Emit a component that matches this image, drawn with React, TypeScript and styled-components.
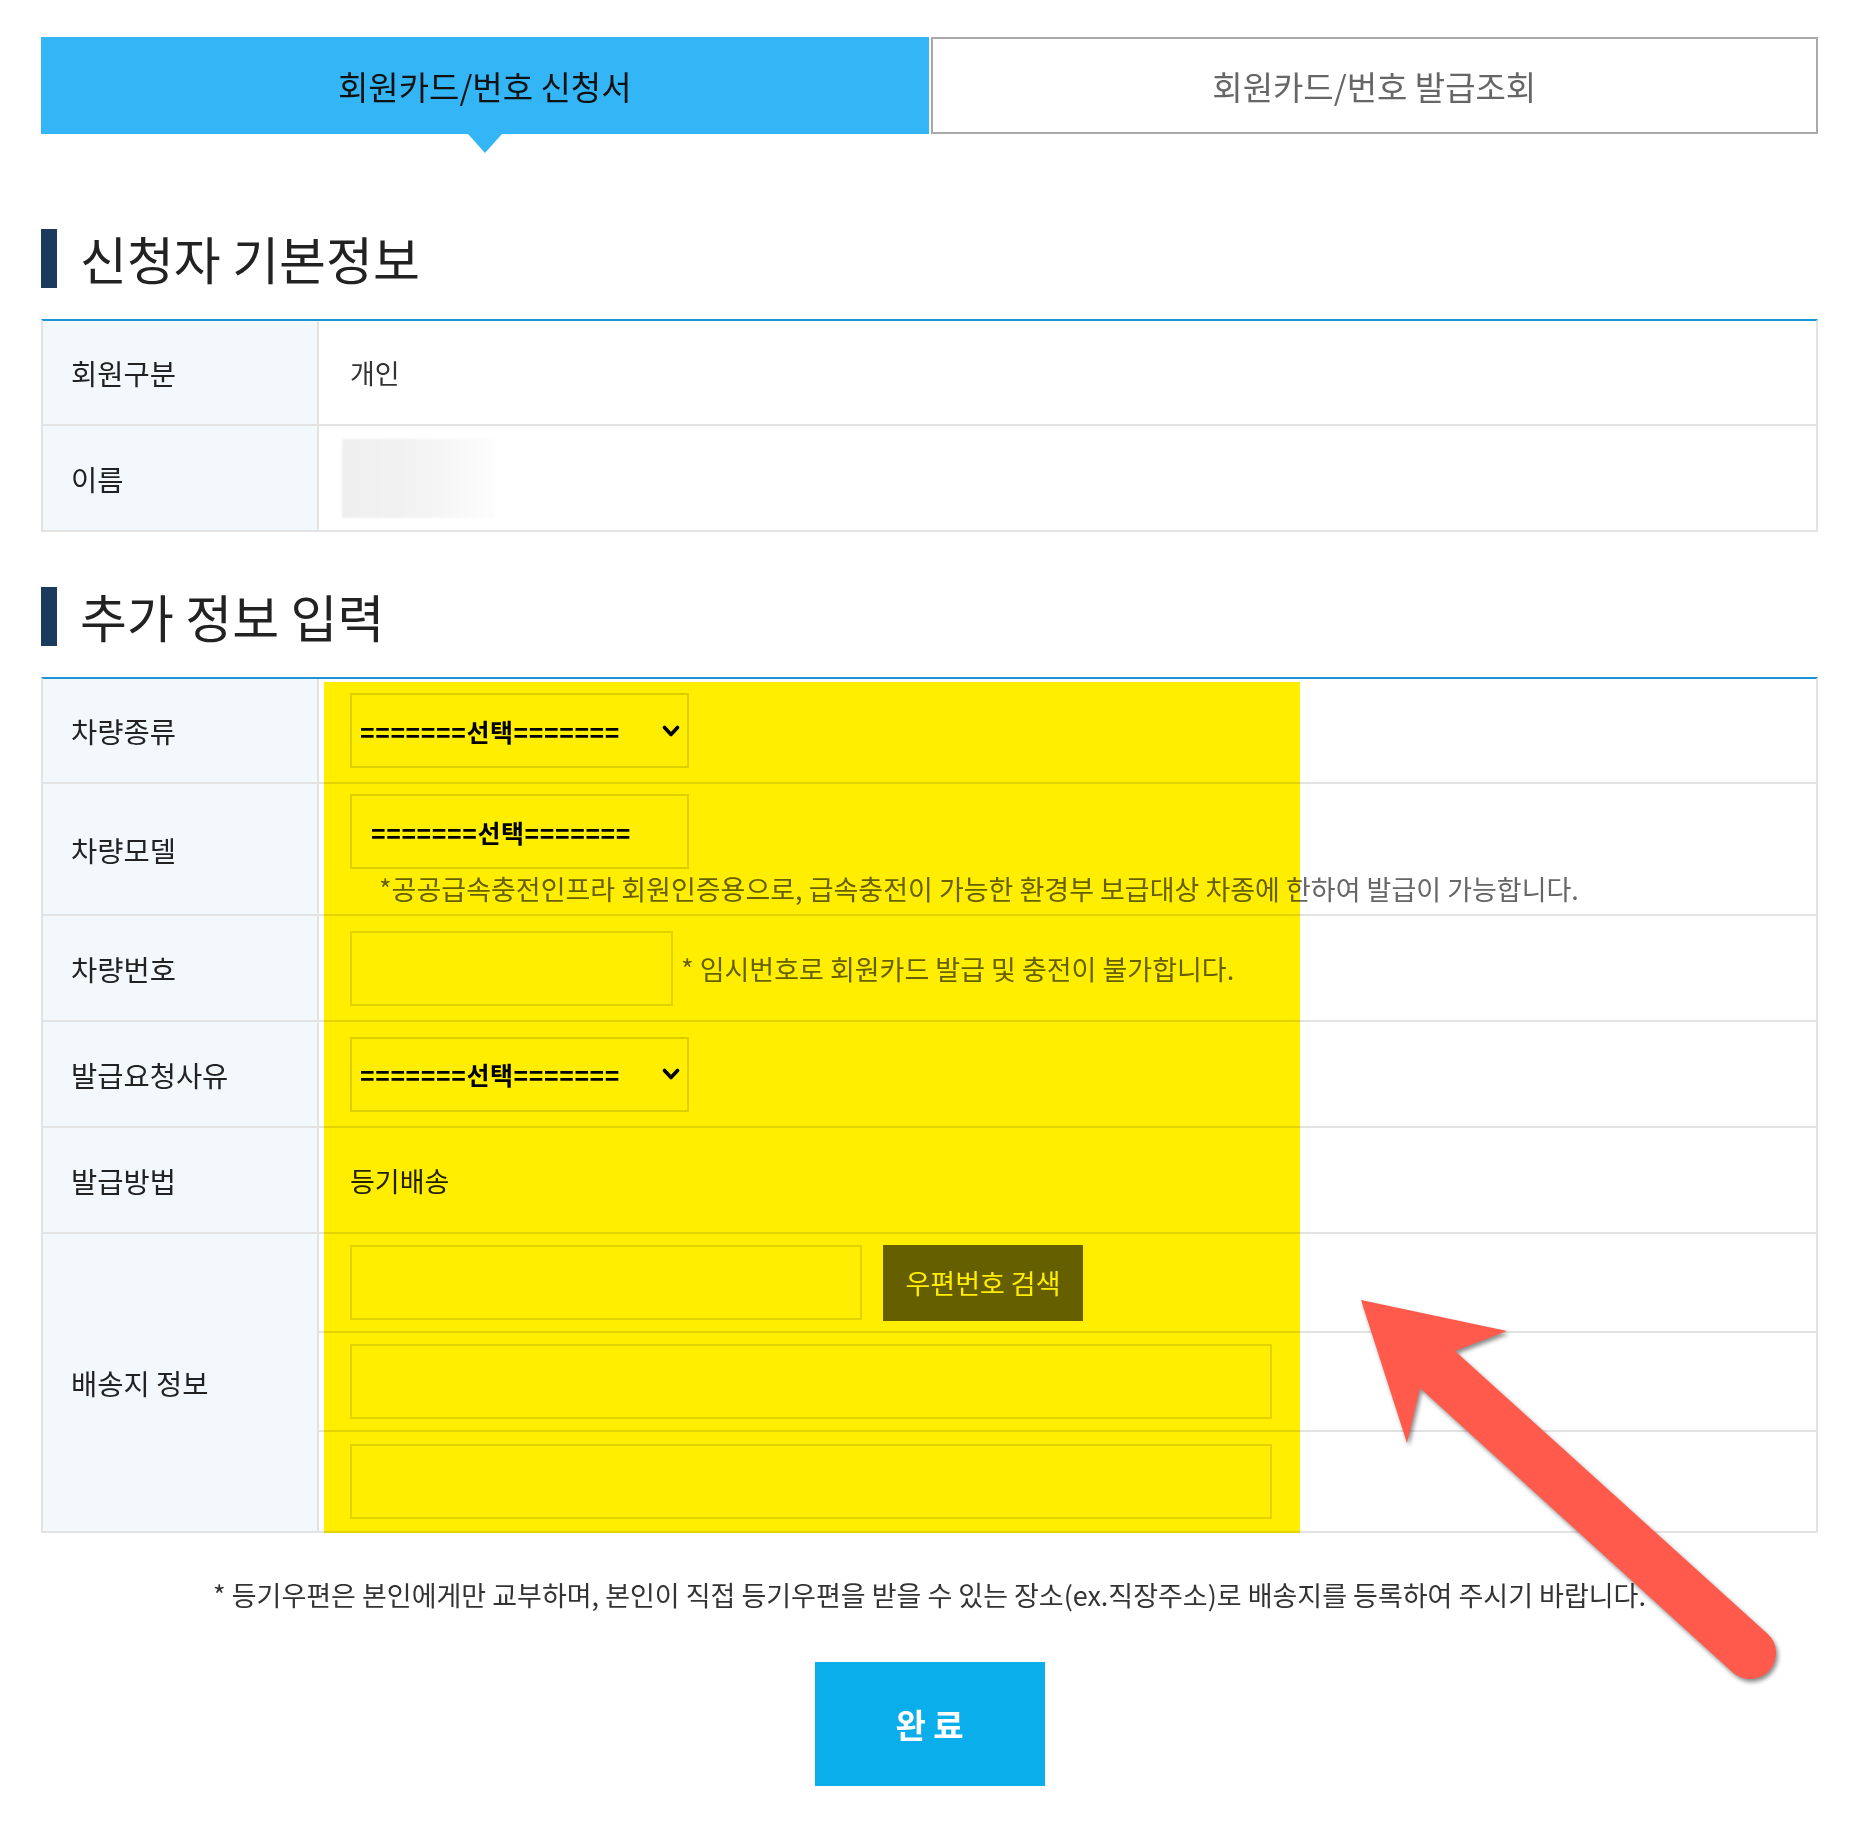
import React from 'react'
import styled, { createGlobalStyle } from 'styled-components'

const GlobalStyle = createGlobalStyle`
  * {
    box-sizing: border-box;
  }
  body {
    margin: 0;
    background: #fff;
    color: #222;
    font-family: "Noto Sans CJK KR", "Noto Sans", sans-serif;
  }
`

function Chevron() {
  return (
    <svg width="18" height="12" viewBox="0 0 18 12">
      <polyline points="2.5,2.5 9,9.5 15.5,2.5" fill="none" stroke="#000" strokeWidth="3.6" strokeLinecap="round" strokeLinejoin="round" />
    </svg>
  )
}

function App() {
  return (
    <Page>
      <GlobalStyle />
      <TabBar>
        <Tab $active>회원카드/번호 신청서</Tab>
        <Tab>회원카드/번호 발급조회</Tab>
      </TabBar>

      <SectionTitle $top={95}>신청자 기본정보</SectionTitle>
      <Table>
        <Row $h={105}>
          <Label>회원구분</Label>
          <Value>개인</Value>
        </Row>
        <Row $h={106}>
          <Label>이름</Label>
          <Value>
            <NameBlur />
          </Value>
        </Row>
      </Table>

      <SectionTitle $top={55}>추가 정보 입력</SectionTitle>
      <Table>
        <Row $h={105}>
          <Label>차량종류</Label>
          <Value>
            <SelectBox>
              <span>=======선택=======</span>
              <Chevron />
            </SelectBox>
          </Value>
        </Row>
        <Row $h={132}>
          <Label>차량모델</Label>
          <StackValue>
            <SelectBox $plain>
              <span>=======선택=======</span>
            </SelectBox>
            <Note $ml={29}>*공공급속충전인프라 회원인증용으로, 급속충전이 가능한 환경부 보급대상 차종에 한하여 발급이 가능합니다.</Note>
          </StackValue>
        </Row>
        <Row $h={106}>
          <Label>차량번호</Label>
          <Value>
            <TextInput $w={323} />
            <Note $ml={8}>* 임시번호로 회원카드 발급 및 충전이 불가합니다.</Note>
          </Value>
        </Row>
        <Row $h={106}>
          <Label>발급요청사유</Label>
          <Value>
            <SelectBox>
              <span>=======선택=======</span>
              <Chevron />
            </SelectBox>
          </Value>
        </Row>
        <Row $h={106}>
          <Label>발급방법</Label>
          <Value $dark>등기배송</Value>
        </Row>
        <Row>
          <Label>배송지 정보</Label>
          <AddressCol>
            <SubRow>
              <TextInput $w={512} />
              <ZipButton>우편번호 검색</ZipButton>
            </SubRow>
            <SubRow>
              <TextInput $w={922} />
            </SubRow>
            <SubRow>
              <TextInput $w={922} />
            </SubRow>
          </AddressCol>
        </Row>
      </Table>

      <FootNote>* 등기우편은 본인에게만 교부하며, 본인이 직접 등기우편을 받을 수 있는 장소(ex.직장주소)로 배송지를 등록하여 주시기 바랍니다.</FootNote>
      <DoneButton>완 료</DoneButton>

      <Highlight />
      <ArrowSvg viewBox="1330 1280 480 420" width="480" height="420">
        <path
          d="M1361,1300 L1507,1331 L1455,1351 L1767.5,1633.7 A26,26 0 0 1 1732.5,1672.3 L1420,1388 L1407,1443 Z"
          fill="#ff5a4b"
        />
      </ArrowSvg>
    </Page>
  )
}

export default App

const Page = styled.div`
  position: relative;
  width: 1868px;
  min-height: 1826px;
  padding: 37px 50px 40px 41px;
`

const TabBar = styled.div`
  display: grid;
  grid-template-columns: 1fr 1fr;
  gap: 2px;
  height: 97px;
`

const Tab = styled.div<{ $active?: boolean }>`
  position: relative;
  display: flex;
  align-items: center;
  justify-content: center;
  font-size: 33px;
  background: ${p => (p.$active ? '#34b5f6' : '#fff')};
  color: ${p => (p.$active ? '#111' : '#666')};
  border: ${p => (p.$active ? 'none' : '2px solid #a9a9a9')};

  &::after {
    content: '';
    display: ${p => (p.$active ? 'block' : 'none')};
    position: absolute;
    left: 50%;
    bottom: -19px;
    margin-left: -17px;
    border-left: 17px solid transparent;
    border-right: 17px solid transparent;
    border-top: 19px solid #34b5f6;
  }
`

const SectionTitle = styled.h2<{ $top: number }>`
  display: flex;
  align-items: center;
  height: 59px;
  margin: ${p => p.$top}px 0 31px;
  font-size: 51px;
  font-weight: 400;
  line-height: 59px;
  color: #222;

  &::before {
    content: '';
    width: 16px;
    height: 59px;
    margin-right: 23px;
    background: #1c3a5e;
  }
`

const Table = styled.div`
  border-top: 2px solid #1b95d3;
  border-left: 2px solid #e3e3e3;
  border-right: 2px solid #e3e3e3;
`

const Row = styled.div<{ $h?: number }>`
  display: grid;
  grid-template-columns: 276px 1fr;
  height: ${p => (p.$h ? `${p.$h}px` : 'auto')};
  border-bottom: 2px solid #e3e3e3;
`

const Label = styled.div`
  display: flex;
  align-items: center;
  padding-left: 28px;
  background: #f2f8fb;
  border-right: 2px solid #e3e3e3;
  font-size: 28.5px;
  color: #222;
`

const Value = styled.div<{ $dark?: boolean }>`
  display: flex;
  align-items: center;
  padding-left: 31px;
  font-size: 27px;
  color: ${p => (p.$dark ? '#222' : '#333')};
`

const StackValue = styled.div`
  display: flex;
  flex-direction: column;
  align-items: flex-start;
  padding: 10px 0 0 31px;
`

const NameBlur = styled.div`
  width: 153px;
  height: 79px;
  margin-left: -8px;
  background: linear-gradient(90deg, #efefef 0%, #f2f2f2 45%, #f9f9f9 80%, #fdfdfd 100%);
  filter: blur(1px);
`

const SelectBox = styled.div<{ $plain?: boolean }>`
  display: flex;
  align-items: center;
  justify-content: space-between;
  width: 339px;
  height: 75px;
  padding: 0 7px 0 ${p => (p.$plain ? 19 : 8)}px;
  background: #fff;
  border: 2px solid #dedede;
  font-family: "Liberation Sans", "Noto Sans CJK KR", sans-serif;
  font-size: 25px;
  font-weight: 700;
  letter-spacing: 0.6px;
  color: #000;
`

const Note = styled.span<{ $ml: number }>`
  margin-left: ${p => p.$ml}px;
  margin-top: 2px;
  font-size: 27px;
  line-height: 36px;
  color: #666;
  white-space: nowrap;
`

const TextInput = styled.input<{ $w: number }>`
  width: ${p => p.$w}px;
  height: 75px;
  padding: 0 10px;
  background: #fff;
  border: 2px solid #e2e2e2;
  outline: none;
  font-size: 24px;
`

const AddressCol = styled.div`
  display: flex;
  flex-direction: column;
`

const SubRow = styled.div`
  display: flex;
  align-items: center;
  height: 99px;
  padding-left: 31px;
  border-bottom: 2px solid #e3e3e3;

  &:last-child {
    border-bottom: none;
  }
`

const ZipButton = styled.button`
  width: 200px;
  height: 76px;
  margin-left: 21px;
  background: #666;
  color: #fff;
  border: none;
  font-family: inherit;
  font-size: 27px;
`

const FootNote = styled.p`
  margin: 44px 0 0;
  text-align: center;
  font-size: 27px;
  line-height: 36px;
  color: #333;
`

const DoneButton = styled.button`
  display: block;
  width: 230px;
  height: 124px;
  margin: 49px auto 0;
  background: #0aaeea;
  color: #fff;
  border: none;
  font-family: inherit;
  font-size: 33px;
  font-weight: 700;
`

const Highlight = styled.div`
  position: absolute;
  left: 324px;
  top: 682px;
  width: 976px;
  height: 851px;
  background: #ffee00;
  mix-blend-mode: multiply;
  pointer-events: none;
`

const ArrowSvg = styled.svg`
  position: absolute;
  left: 1330px;
  top: 1280px;
  pointer-events: none;
  filter: drop-shadow(2px 3px 2px rgba(0, 0, 0, 0.45));
`
